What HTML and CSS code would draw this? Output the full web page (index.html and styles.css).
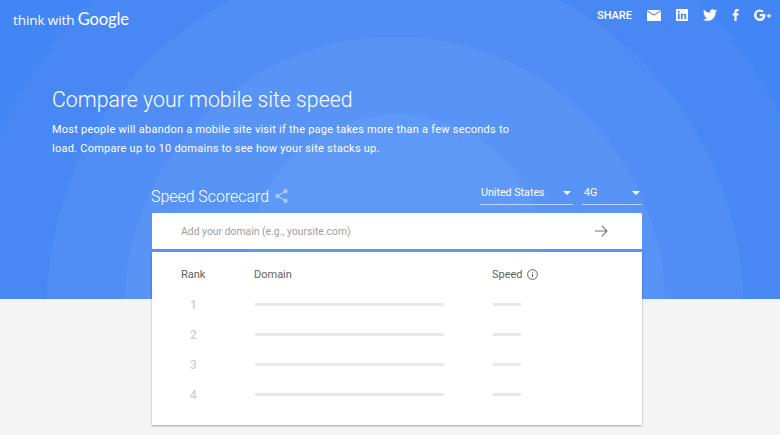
FILE: index.html
```html
<!DOCTYPE html>
<html lang="en">
<head>
    <meta charset="UTF-8">
    <meta name="viewport" content="width=device-width, initial-scale=1.0">
    <title>Speed Scorecard</title>
    <link rel="stylesheet" href="styles.css">
</head>
<body>
    <section class="hero">
        <header class="topbar">
            <div class="logo">think with <span class="logo-google">Google</span></div>
            <nav class="share">
                <span class="share-label">SHARE</span>
                <svg class="icon-mail" width="14" height="11" viewBox="0 0 14 11"><path d="M0 0h14L7 4.600z M0 1.300l7 4.500 7-4.500V11H0z" fill="#fff"/></svg>
                <svg class="icon-linkedin" width="12" height="12" viewBox="0 0 13 13"><path fill-rule="evenodd" fill="#fff" d="M1 0h11a1 1 0 0 1 1 1v11a1 1 0 0 1-1 1H1a1 1 0 0 1-1-1V1a1 1 0 0 1 1-1z M2 5v6h2V5z M3 2a1.100 1.100 0 1 0 0 2.200A1.100 1.100 0 0 0 3 2z M5.200 5v6h2V7.800c0-1.600 2-1.700 2 0V11h2V7.400c0-2.800-3-2.800-4-1.400V5z"/></svg>
                <svg class="icon-twitter" width="14" height="12" viewBox="0 0 24 20"><path fill="#fff" d="M24 2.400c-.9.400-1.800.7-2.800.8 1-.6 1.800-1.600 2.200-2.700-1 .6-2 1-3.100 1.200C19.300.7 18 0 16.600 0c-2.700 0-4.900 2.200-4.900 4.900 0 .4 0 .8.100 1.100C7.700 5.800 4.100 3.900 1.700.9 1.200 1.600 1 2.500 1 3.400c0 1.700.9 3.200 2.200 4.100-.8 0-1.600-.2-2.200-.6v.1c0 2.400 1.700 4.400 3.900 4.800-.4.100-.8.200-1.300.2-.3 0-.6 0-.9-.1.600 2 2.400 3.400 4.600 3.400-1.700 1.300-3.800 2.100-6.100 2.100-.4 0-.8 0-1.200-.1C2.200 19.300 4.800 20 7.500 20c9.100 0 14-7.500 14-14v-.6c1-.7 1.800-1.600 2.500-3z"/></svg>
                <svg class="icon-facebook" width="7" height="12" viewBox="0 0 7 12"><path fill="#fff" d="M4.600 12V6.600h1.800L6.700 4.500H4.600V3.200c0-.6.200-1 1-1h1.100V.1C6.500.1 5.900 0 5.100 0 3.500 0 2.400 1 2.400 2.900v1.600H.6v2.100h1.800V12z"/></svg>
                <svg class="icon-gplus" width="18" height="12" viewBox="0 0 18 12"><path fill="#fff" d="M5.800 5v2.200h3.100c-.3 1.200-1.400 2.200-3.100 2.200a3.400 3.400 0 0 1 0-6.800c.9 0 1.700.3 2.300.9l1.600-1.600A5.700 5.700 0 0 0 5.800.4a5.800 5.800 0 0 0 0 11.600c3.400 0 5.600-2.400 5.600-5.700 0-.5 0-.9-.1-1.300z"/><path fill="#fff" d="M15.500 4.700h-1.100v1.600h-1.600v1.100h1.600V9h1.100V7.400h1.600V6.300h-1.600z"/></svg>
            </nav>
        </header>
        <div class="intro">
            <h1>Compare your mobile site speed</h1>
            <p>Most people will abandon a mobile site visit if the page takes more than a few seconds to load. Compare up to 10 domains to see how your site stacks up.</p>
        </div>
        <div class="scorecard">
            <div class="scorecard-head">
                <h2>Speed Scorecard</h2>
                <svg class="icon-share" width="13" height="14" viewBox="0 0 13 14"><path d="M10.500 2.300 2.500 7l8 4.700" fill="none" stroke="#a9c6f7" stroke-width="1.300"/><circle cx="10.500" cy="2.300" r="2.200" fill="#a9c6f7"/><circle cx="2.500" cy="7" r="2.200" fill="#a9c6f7"/><circle cx="10.500" cy="11.700" r="2.200" fill="#a9c6f7"/></svg>
                <div class="select select-country">United States<span class="caret"></span></div>
                <div class="select select-network">4G<span class="caret"></span></div>
            </div>
            <div class="domain-input">
                <span class="placeholder">Add your domain (e.g., yoursite.com)</span>
                <svg width="13" height="12" viewBox="0 0 13 12"><path d="M0 6h12M6.700.7 12 6l-5.300 5.300" fill="none" stroke="#757575" stroke-width="1.100"/></svg>
            </div>
            <div class="results">
                <div class="row row-head">
                    <span class="col-rank">Rank</span>
                    <span class="col-domain">Domain</span>
                    <span class="col-speed">Speed
                        <svg width="11" height="11" viewBox="0 0 11 11"><circle cx="5.500" cy="5.500" r="4.900" fill="none" stroke="#616161" stroke-width="1"/><path d="M5.500 4.800v3.200M5.500 2.800v1.100" stroke="#616161" stroke-width="1"/></svg>
                    </span>
                </div>
                <div class="row"><span class="col-rank num">1</span><span class="col-domain"><i class="bar bar-domain"></i></span><span class="col-speed"><i class="bar bar-speed"></i></span></div>
                <div class="row"><span class="col-rank num">2</span><span class="col-domain"><i class="bar bar-domain"></i></span><span class="col-speed"><i class="bar bar-speed"></i></span></div>
                <div class="row"><span class="col-rank num">3</span><span class="col-domain"><i class="bar bar-domain"></i></span><span class="col-speed"><i class="bar bar-speed"></i></span></div>
                <div class="row"><span class="col-rank num">4</span><span class="col-domain"><i class="bar bar-domain"></i></span><span class="col-speed"><i class="bar bar-speed"></i></span></div>
            </div>
        </div>
    </section>
</body>
</html>
```

FILE: styles.css
```css
html, body {
    height: 100%;
    overflow: hidden;
}

body {
    margin: 0;
    background-color: #f4f4f4;
    font-family: Roboto, Arial, sans-serif;
    color: #fff;
}

.hero {
    height: 299px;
    background-color: #4285f4;
    background-image:
        radial-gradient(circle at 397px 264px, #5f99f7 149px, transparent 149.500px),
        radial-gradient(circle at 395px 307px, #5893f6 270px, transparent 270.500px),
        radial-gradient(circle at 395px 307px, #508df5 348px, transparent 348.500px),
        radial-gradient(circle at 395px 307px, #4888f5 430px, transparent 430.500px);
}

.topbar {
    display: flex;
    justify-content: space-between;
    align-items: center;
    height: 36px;
    padding: 0 8px 0 13px;
}

.logo {
    padding-top: 2px;
    font-family: "Open Sans", sans-serif;
    font-size: 13.500px;
    letter-spacing: -0.1px;
}

.logo-google {
    font-family: Lato, sans-serif;
    font-size: 16.500px;
}

.share {
    display: flex;
    align-items: center;
    gap: 15px;
    margin-bottom: 6px;
}

.share-label {
    font-size: 11px;
    font-weight: 500;
}

.intro {
    padding: 50px 0 0 52px;
    width: 470px;
}

h1 {
    margin: 0;
    font-size: 21.300px;
    font-weight: 300;
    line-height: 28px;
}

.intro p {
    margin: 6px 0 0;
    font-size: 11px;
    line-height: 19px;
    letter-spacing: 0.245px;
}

.scorecard {
    width: 490px;
    margin: 23px 0 0 152px;
}

.scorecard-head {
    display: flex;
    align-items: center;
    height: 30px;
}

h2 {
    margin: 0 6px 0 -1px;
    font-size: 15.900px;
    font-weight: 300;
}

.select {
    align-self: flex-start;
    display: flex;
    justify-content: space-between;
    align-items: center;
    height: 24px;
    border-bottom: 1px solid #bcd3fa;
    font-size: 10.700px;
    padding: 0 2px 0 1px;
    margin-left: 9px;
    box-sizing: border-box;
}

.select-country {
    width: 93px;
    margin-left: auto;
}

.select-network {
    width: 60px;
    padding-left: 2px;
}

.caret {
    width: 0;
    height: 0;
    border-left: 4px solid transparent;
    border-right: 4px solid transparent;
    border-top: 4px solid #fff;
}

.domain-input {
    display: flex;
    justify-content: space-between;
    align-items: center;
    height: 36px;
    margin-top: 2px;
    padding: 0 34px 0 29px;
    background-color: #fff;
    border-radius: 1px;
}

.placeholder {
    font-size: 10.400px;
    color: #9e9e9e;
}

.results {
    margin-top: 3px;
    height: 173px;
    padding-top: 7px;
    box-sizing: border-box;
    background-color: #fff;
    box-shadow: 0 1px 2px rgba(0, 0, 0, 0.35);
}

.row {
    display: flex;
    align-items: center;
    height: 30px;
    color: #616161;
    font-size: 11px;
}

.row-head {
    height: 31px;
    padding-bottom: 1px;
    box-sizing: border-box;
}

.col-rank {
    width: 102px;
    padding-left: 29px;
    box-sizing: border-box;
}

.col-domain {
    width: 238px;
}

.col-speed {
    display: flex;
    align-items: center;
    gap: 4px;
}

.num {
    padding-left: 38px;
    font-size: 12px;
    font-weight: 500;
    color: #cfcfcf;
}

.bar {
    display: block;
    height: 3px;
    margin: -1px 0 0 1px;
    background-color: #e8e8e8;
}

.bar-domain {
    width: 189px;
}

.bar-speed {
    width: 28px;
}
```
